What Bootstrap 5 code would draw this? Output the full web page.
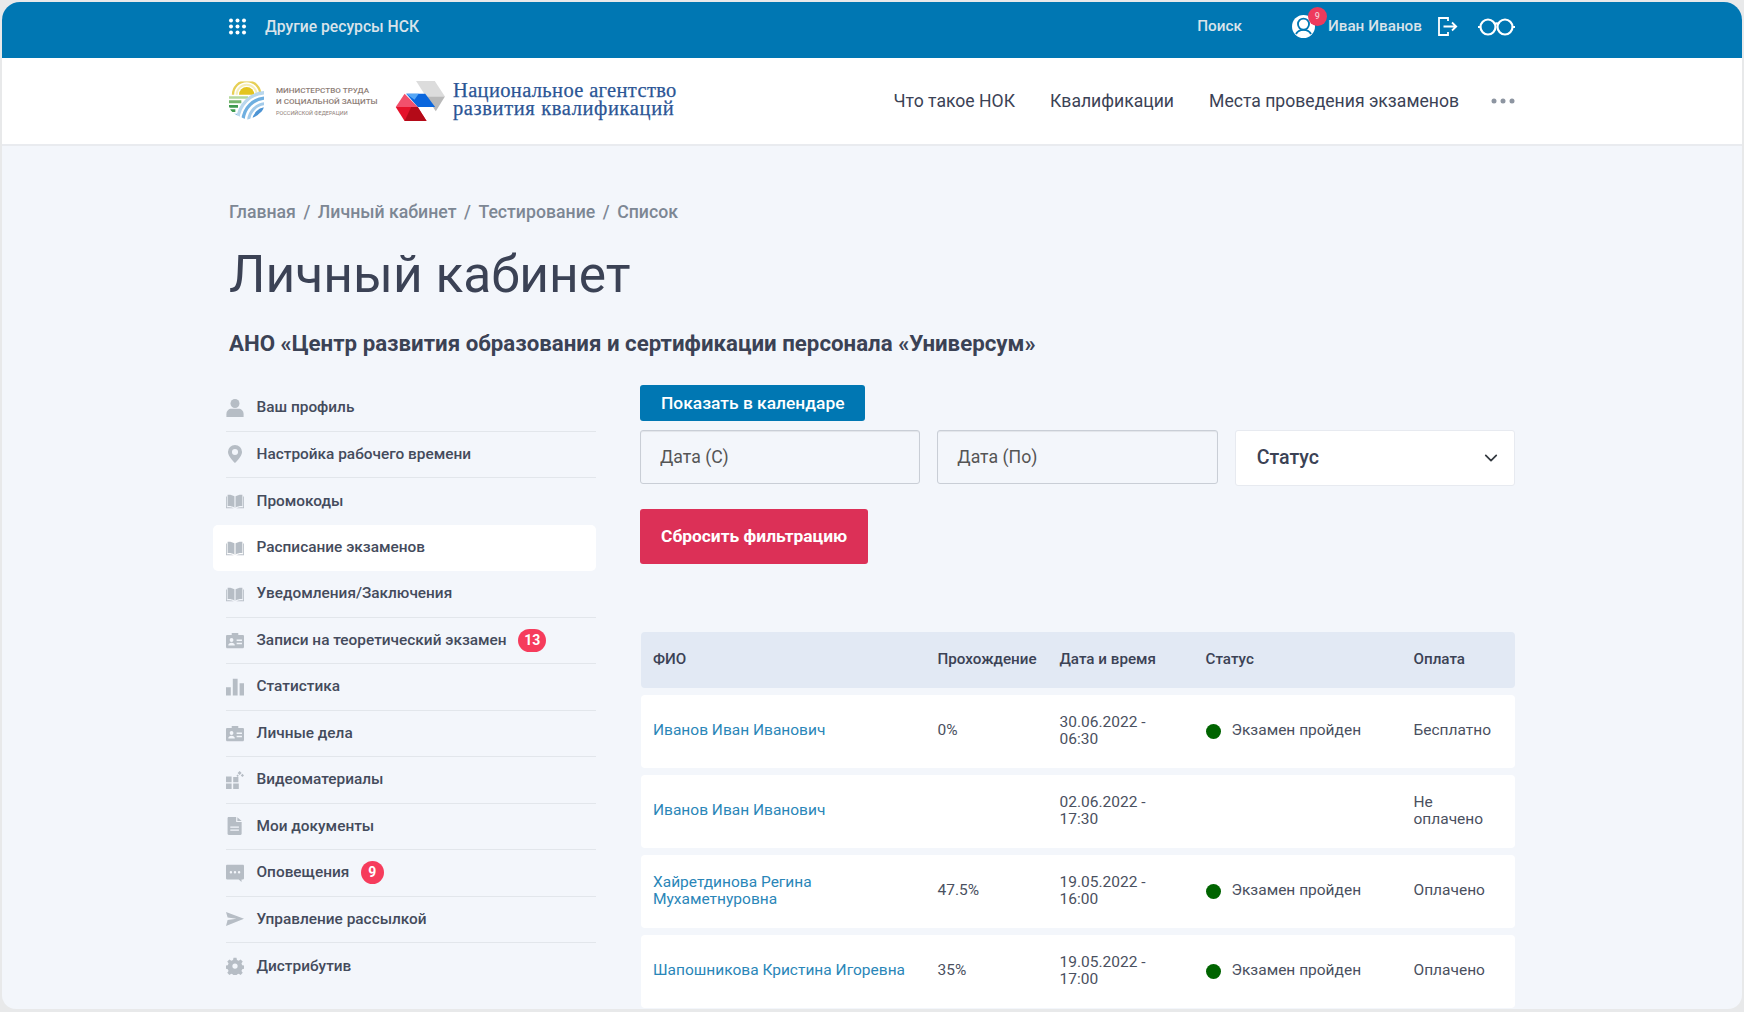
<!DOCTYPE html>
<html lang="ru"><head><meta charset="utf-8">
<link href="https://cdn.jsdelivr.net/npm/bootstrap@5.3.0/dist/css/bootstrap.min.css" rel="stylesheet">
<style>
html,body{height:100%;overflow:hidden}
body{background:#e8e9ea;font-family:Roboto,"Liberation Sans",sans-serif;color:#3b4255}
.frame{height:1007px;margin:2px;border-radius:18px 18px 14px 14px;overflow:hidden;background:#f3f6fb}
.wrap{width:1286px;margin:0 auto}
.topbar{height:56px;background:#0077b3;color:#d9e3ea;font-size:15.7px;font-weight:500}
.topbar .wrap{height:49px}
.grid-ico{width:19px;height:17px;fill:#fff;margin:0 18px 0 -1px}
.top-r{font-size:15.3px}
.user-box{position:relative;margin-left:50px;margin-right:13px;width:23px;height:23px}
.user-box svg{display:block;width:23px;height:23px}
.num-dot{position:absolute;left:16px;top:-8px;width:19px;height:19px;border-radius:50%;background:#ee3a5c;color:#f3c9d2;font-size:9px;line-height:19px;text-align:center}
.out-ico{width:21px;height:21px;margin-left:15px;fill:none;stroke:#fff;stroke-width:1.8}
.eye-ico{width:37px;height:20px;margin-left:20px;fill:none;stroke:#fff;stroke-width:2.2}
.hdr{height:87.500px;background:#fff;border-bottom:2px solid #e9ebef}
.brand-tiles{width:35px;height:39px;flex:none}
.min-text{margin-left:12px;width:117px;color:#8d7d76;font-size:8.1px;font-weight:500;line-height:11px;padding-top:2px}
.min-text span{display:block;white-space:nowrap}
.min-text .thin{font-size:5.5px;font-weight:400;margin-top:1px}
.hex-logo{width:56px;height:42px;flex:none}
.agency{margin-left:4px;color:#2b5595;font-family:"Liberation Serif",serif;font-size:20.5px;white-space:nowrap;letter-spacing:.35px;-webkit-text-stroke:.25px #2b5595;padding-bottom:3px}
.agency span{display:block;height:18px;line-height:18px}
.agency .second{letter-spacing:.62px}
.topnav{font-size:17.6px;gap:35px;font-weight:400;color:#3b4255}
.more-dots{width:24px;height:6px;fill:#8d95a1;margin-left:-3px}
.crumbs{font-size:17.7px;padding-top:55.500px;line-height:22px;margin:0;font-weight:500}
.crumbs .breadcrumb-item,.crumbs .breadcrumb-item::before{color:#7d8794}
.crumbs .breadcrumb-item+.breadcrumb-item{padding-left:.47rem}
.crumbs .breadcrumb-item+.breadcrumb-item::before{padding-right:.47rem}
.pagetitle{font-size:51.5px;font-weight:400;color:#3b4255;line-height:66px;margin:19px 0 0}
.subtitle{font-size:22.280px;font-weight:700;color:#3b4255;line-height:28px;margin:21px 0 0}
.menu-col{width:370px;margin-left:-3px;margin-right:44px;flex:none;margin-top:28px;color:#444b5c}
.mitem{height:46.5px;display:flex;align-items:center;gap:12.500px;font-size:15.4px;font-weight:500;border-bottom:1px solid #e2e6eb}
.mitem svg{width:18px;height:18px;fill:#b6bdc5;flex:none}
.mitem.on{background:#fff;border:0;margin-left:-13px;padding-left:13px;border-radius:5px}
.mitem.noline{border-bottom:0}
.pill{background:#f63c5c;color:#fff;border-radius:12px;font-size:14px;font-weight:700;min-width:23px;text-align:center;padding:0 6px;line-height:23px;margin-left:-1px}
.main-col{flex:1;margin-top:28px;min-width:0}
.act-btn{border:0;border-radius:3px;color:#fff;font-weight:500;padding:0 21px;font-size:17.4px}
.btn-cal,.btn-cal:hover{background:#0077b3;color:#fff;height:36px;line-height:33px}
.btn-reset,.btn-reset:hover{background:#dc3057;color:#fff;height:55px;margin-top:23px;font-weight:700}
.filters{gap:17px;margin-top:9px}
.filters>*{flex:none;width:calc((100% - 34px)/3)}
.filters .date-in{height:54px;background:#f3f6fb;border:1px solid #c9ced6;border-radius:3px;padding:0 19px;font-size:17.700px;color:#555;box-shadow:inset 0 1px 1px rgba(0,0,0,.07)}
.date-in::placeholder{color:#555;opacity:1}
.status-sel{height:56px;border:1px solid #e7eaf0;border-radius:3px;padding:0 40px 0 21px;font-size:19.6px;font-weight:500;color:#3b4255;background-position:right 14px center;background-size:18px 14px}
.nok-table{table-layout:fixed;width:874px;margin:60.500px 0 0 1px;border-collapse:separate;border-spacing:0 7px;font-size:15.5px;line-height:17.4px;color:#4a5060;background:transparent}
.nok-table th,.nok-table td{padding:0 12px;vertical-align:middle}
.nok-table th{height:56px;background:#e2e9f4;font-weight:500;color:#3b4255;white-space:nowrap;font-size:15.2px}
.nok-table td{height:73px;background:#fff}
.nok-table tr>*:first-child{border-radius:4px 0 0 4px}
.nok-table tr>*:last-child{border-radius:0 4px 4px 0;padding-right:20px}
.nok-table a{color:#2a86b8;text-decoration:none}
.nok-table col:nth-child(1){width:284.5px}
.nok-table col:nth-child(2){width:122px}
.nok-table col:nth-child(3){width:146px}
.nok-table col:nth-child(4){width:208px}
.nok-table col:nth-child(5){width:113.5px}
.st-wrap{gap:11px}
.st-dot{width:15px;height:15px;border-radius:50%;background:#006400;flex:none}
.sym-defs{width:0;height:0;position:absolute}
</style></head><body>
<svg class="sym-defs">
<defs>
<symbol id="i-book" viewBox="1 1.500 22 21"><path d="M11.300 6.200C9 4.600 6 4 3 4.300v14c3-.3 6 .3 8.300 1.800zM12.700 6.200C15 4.600 18 4 21 4.300v14c-3-.3-6 .3-8.300 1.800z"/><path d="M1 6.500h1v13.300c3-.3 6-.1 8.500 1H1zM23 6.500h-1v13.300c-3-.3-6-.1-8.500 1H23z"/></symbol>
<symbol id="i-card" viewBox="1 1.500 22 21"><path fill-rule="evenodd" d="M1 7.500C1 6.700 1.700 6 2.500 6H8V3.500h8V6h5.500c.8 0 1.500.7 1.500 1.500v13c0 .8-.7 1.500-1.500 1.500h-19C1.700 22 1 21.300 1 20.500zM7.800 9.700a2.300 2.300 0 1 0 0 4.600 2.300 2.300 0 0 0 0-4.600zM3.800 18.800h8c0-2.200-1.800-3.300-4-3.300s-4 1.100-4 3.300zM14 11.500v1.600h6.500v-1.600zM14 15.500v1.600h6.500v-1.600z"/></symbol>
</defs></svg>
<div class="frame">
<div class="topbar"><div class="wrap d-flex align-items-center">
<svg class="grid-ico" viewBox="0 0 19 17"><circle cx="3" cy="2.500" r="2"/><circle cx="9.500" cy="2.500" r="2"/><circle cx="16" cy="2.500" r="2"/><circle cx="3" cy="8.500" r="2"/><circle cx="9.500" cy="8.500" r="2"/><circle cx="16" cy="8.500" r="2"/><circle cx="3" cy="14.500" r="2"/><circle cx="9.500" cy="14.500" r="2"/><circle cx="16" cy="14.500" r="2"/></svg>
<span>Другие ресурсы НСК</span>
<span class="ms-auto top-r">Поиск</span>
<span class="user-box"><svg viewBox="0 0 24 24"><circle cx="12" cy="12" r="12" fill="#fff"/><circle cx="12" cy="9.500" r="5.800" fill="none" stroke="#0077b3" stroke-width="1.900"/><path d="M4.200 19.800c1.500-3.200 4.300-4.300 7.800-4.300s6.300 1.100 7.800 4.300" fill="none" stroke="#0077b3" stroke-width="2"/></svg><span class="num-dot">9</span></span>
<span class="top-r">Иван Иванов</span>
<svg class="out-ico" viewBox="0 0 21 21"><path d="M11 5V2H2v17h9v-3M6.500 10.500H19M15 6.500l4.200 4-4.200 4"/></svg>
<svg class="eye-ico" viewBox="0 0 37 20"><circle cx="10" cy="10" r="7.500"/><circle cx="27" cy="10" r="7.500"/><path d="M16 7.500c2.500-1.500 3-1.500 5 0M2.500 10H0M34.500 10H37"/></svg>
</div></div>
<div class="hdr"><div class="wrap d-flex align-items-center h-100">
<svg class="brand-tiles" viewBox="15 15 105 115"><defs><clipPath id="shield"><path d="M15 15H120V90Q118 115 70 130Q20 115 15 90Z"/></clipPath></defs>
<g clip-path="url(#shield)" fill="none"><path d="M27 55A41 41 0 0 1 109 55" stroke="#e6cf55" stroke-width="7"/><path d="M38 55A30 30 0 0 1 98 55" stroke="#f5edb8" stroke-width="6"/><path d="M45 55A23 23 0 0 1 91 55Z" fill="#e3c41f"/>
<path d="M15 60H72V67H15z" fill="#b5d89b"/><path d="M15 72H52V81H15z" fill="#74b56c"/><path d="M15 86H42V94H15z" fill="#3f9a4f"/><path d="M15 99H34V107H15z" fill="#3f9a4f"/><path d="M15 112H40V120H15z" fill="#7db6dd"/>
<circle cx="127" cy="135" r="86" stroke="#b9d7ed" stroke-width="10"/><circle cx="127" cy="135" r="70" stroke="#6fafe0" stroke-width="10"/><circle cx="127" cy="135" r="53" stroke="#a3cbea" stroke-width="9"/><circle cx="127" cy="135" r="37" stroke="#4d94d4" stroke-width="11"/></g></svg>
<div class="min-text"><span>МИНИСТЕРСТВО ТРУДА</span><span>И СОЦИАЛЬНОЙ ЗАЩИТЫ</span><span class="thin">РОССИЙСКОЙ ФЕДЕРАЦИИ</span></div>
<svg class="hex-logo" viewBox="15 10 160 128"><path d="M80 13H137L168 60H110z" fill="#dcdcdc"/><path d="M110 60H168L140 105z" fill="#b9b9b9"/><path d="M50 52H108L138 92H85z" fill="#0a66dd"/><path d="M50 52H88L75 70z" fill="#55a6f5"/><path d="M45 52L85 92H18z" fill="#f2506c"/><path d="M18 92H85L112 135H45z" fill="#e5122a"/><path d="M65 92H85L112 135H45z" fill="#b40a18"/></svg>
<div class="agency"><span>Национальное агентство</span><span class="second">развития квалификаций</span></div>
<div class="topnav d-flex align-items-center ms-auto"><span>Что такое НОК</span><span>Квалификации</span><span>Места проведения экзаменов</span><svg class="more-dots" viewBox="0 0 24 6"><circle cx="3" cy="3" r="2.500"/><circle cx="12" cy="3" r="2.500"/><circle cx="21" cy="3" r="2.500"/></svg></div>
</div></div>
<div class="wrap">
<ol class="breadcrumb crumbs"><li class="breadcrumb-item">Главная</li><li class="breadcrumb-item">Личный кабинет</li><li class="breadcrumb-item">Тестирование</li><li class="breadcrumb-item">Список</li></ol>
<h1 class="pagetitle">Личный кабинет</h1>
<div class="subtitle">АНО «Центр развития образования и сертификации персонала «Универсум»</div>
<div class="d-flex">
<div class="menu-col">
<div class="mitem"><svg viewBox="1 1 22 22"><circle cx="12" cy="6.500" r="5.500"/><path d="M1.500 23v-3.500c0-4 3-6.500 6-6.500h9c3 0 6 2.500 6 6.500V23z"/></svg>Ваш профиль</div>
<div class="mitem"><svg viewBox="1 1 22 22.500"><path fill-rule="evenodd" d="M12 1a8.800 8.800 0 0 0-8.800 8.800C3.200 15.500 12 23.500 12 23.500s8.800-8 8.800-13.700A8.800 8.800 0 0 0 12 1zM12 6a3.800 3.800 0 1 1 0 7.600A3.800 3.800 0 0 1 12 6z"/></svg>Настройка рабочего времени</div>
<div class="mitem noline"><svg><use href="#i-book"/></svg>Промокоды</div>
<div class="mitem on"><svg><use href="#i-book"/></svg>Расписание экзаменов</div>
<div class="mitem"><svg><use href="#i-book"/></svg>Уведомления/Заключения</div>
<div class="mitem"><svg><use href="#i-card"/></svg>Записи на теоретический экзамен<span class="pill">13</span></div>
<div class="mitem"><svg viewBox="1 1 22.500 22.500"><path d="M1 12.500h6V23H1zM9.500 2h6v21h-6zM18 7.500h5.500V23H18z"/></svg>Статистика</div>
<div class="mitem"><svg><use href="#i-card"/></svg>Личные дела</div>
<div class="mitem"><svg viewBox="1 1 22.500 22.500"><path d="M1 8h7v7H1zM1 16.500h7v7H1zM10 16.500h7v7h-7zM10 8.500h6.500V15H10zM18 1l2.500 2.500L18 6l-2.500-2.500zM21.500 4.500l2 2-2 2-2-2zM15.500 5.500l1.500 1.500-1.500 1.500L14 7z"/></svg>Видеоматериалы</div>
<div class="mitem"><svg viewBox="1 1 23 23"><path fill-rule="evenodd" d="M3 2.500C3 1.700 3.700 1 4.500 1H14v6.500h7v15c0 .8-.7 1.500-1.500 1.500h-15C3.700 24 3 23.300 3 22.500zM6.500 13v1.600h11V13zM6.500 17v1.600h11V17zM15.500 1.300 21 6h-5.500z"/></svg>Мои документы</div>
<div class="mitem"><svg viewBox="1 2 22 22"><path fill-rule="evenodd" d="M1 4.500C1 3.700 1.700 3 2.500 3h19c.8 0 1.500.7 1.500 1.500v15c0 .8-.7 1.500-1.500 1.500H20v3l-3.500-3h-14C1.700 21 1 20.300 1 19.500zM7 10.500a1.500 1.500 0 1 0 0 3 1.500 1.500 0 0 0 0-3zM12 10.500a1.500 1.500 0 1 0 0 3 1.500 1.500 0 0 0 0-3zM17 10.500a1.500 1.500 0 1 0 0 3 1.500 1.500 0 0 0 0-3z"/></svg>Оповещения<span class="pill">9</span></div>
<div class="mitem"><svg viewBox="1 1 22.500 22.500"><path d="M1 3.500 23.500 12 1 21l2-7.500 11-1.500-11-1.500z"/></svg>Управление рассылкой</div>
<div class="mitem noline"><svg viewBox="0 0 24 24"><path fill-rule="evenodd" d="M10 1h4l.6 3 2.300 1 2.600-1.700 2.800 2.800-1.700 2.600 1 2.300 3 .6v4l-3 .6-1 2.300 1.700 2.600-2.800 2.800-2.600-1.700-2.300 1-.6 3h-4l-.6-3-2.300-1-2.600 1.700-2.800-2.800 1.700-2.600-1-2.300-3-.6v-4l3-.6 1-2.300-1.700-2.600 2.800-2.800 2.600 1.700 2.300-1zM12 8.500a3.500 3.500 0 1 0 0 7 3.500 3.500 0 0 0 0-7z"/></svg>Дистрибутив</div>
</div>
<div class="main-col">
<button class="btn act-btn btn-cal d-block">Показать в календаре</button>
<div class="d-flex filters align-items-start">
<input class="form-control date-in" placeholder="Дата (С)">
<input class="form-control date-in" placeholder="Дата (По)">
<select class="form-select status-sel"><option>Статус</option></select>
</div>
<button class="btn act-btn btn-reset d-block">Сбросить фильтрацию</button>
<table class="nok-table">
<colgroup><col><col><col><col><col></colgroup>
<thead><tr><th>ФИО</th><th>Прохождение</th><th>Дата и время</th><th>Статус</th><th>Оплата</th></tr></thead>
<tbody>
<tr><td><a href="#">Иванов Иван Иванович</a></td><td>0%</td><td>30.06.2022 - 06:30</td><td><div class="d-flex align-items-center st-wrap"><span class="st-dot"></span><span>Экзамен пройден</span></div></td><td>Бесплатно</td></tr>
<tr><td><a href="#">Иванов Иван Иванович</a></td><td></td><td>02.06.2022 - 17:30</td><td></td><td>Не оплачено</td></tr>
<tr><td><a href="#">Хайретдинова Регина Мухаметнуровна</a></td><td>47.5%</td><td>19.05.2022 - 16:00</td><td><div class="d-flex align-items-center st-wrap"><span class="st-dot"></span><span>Экзамен пройден</span></div></td><td>Оплачено</td></tr>
<tr><td><a href="#">Шапошникова Кристина Игоревна</a></td><td>35%</td><td>19.05.2022 - 17:00</td><td><div class="d-flex align-items-center st-wrap"><span class="st-dot"></span><span>Экзамен пройден</span></div></td><td>Оплачено</td></tr>
</tbody></table>
</div></div></div></div>
</body></html>
